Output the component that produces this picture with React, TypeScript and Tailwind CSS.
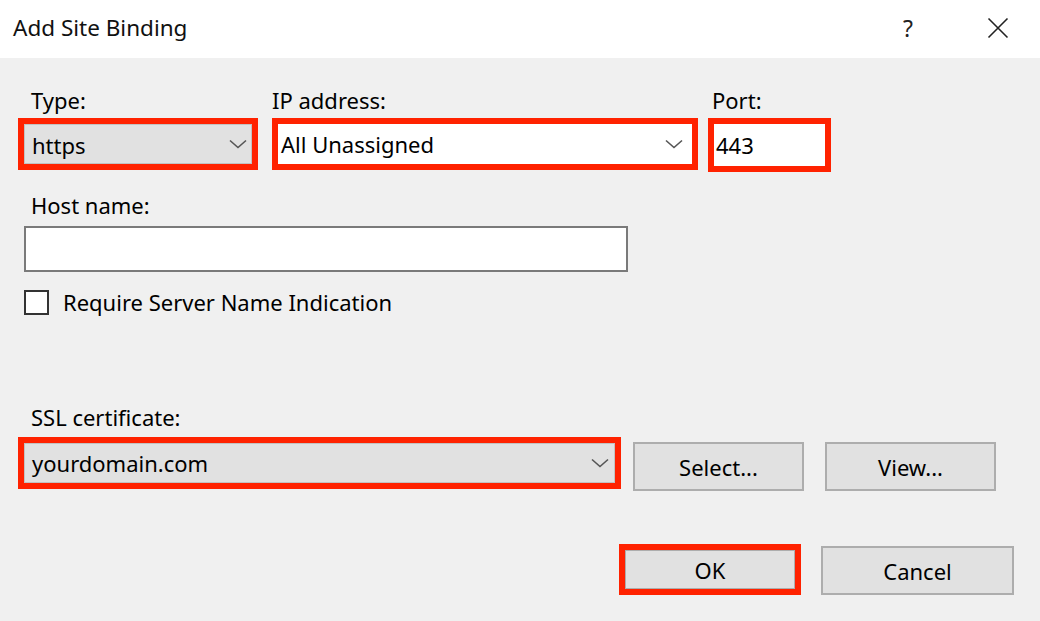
import React from "react";

function Chevron() {
  return (
    <svg width="18" height="10" viewBox="0 0 18 10" className="shrink-0">
      <path d="M1 1.5 L9 8.5 L17 1.5" fill="none" stroke="#555" strokeWidth="1.6" />
    </svg>
  );
}

export default function App() {
  return (
    <div className="w-[1040px] h-[621px] bg-[#f0f0f0] flex flex-col overflow-hidden text-black font-['Noto_Sans',sans-serif] text-[22px]">
      {/* Title bar */}
      <div className="h-[58px] bg-white flex items-center pl-[13px] pr-[31px] pb-[2px] shrink-0">
        <span className="text-[22.5px] leading-[30px] text-[#111]">Add Site Binding</span>
        <span className="ml-auto text-[23px] leading-[30px] text-[#222]">?</span>
        <svg width="22" height="22" viewBox="0 0 22 22" className="ml-[74px]">
          <path d="M1.5 1.5 L20.5 20.5 M20.5 1.5 L1.5 20.5" stroke="#222" strokeWidth="1.6" />
        </svg>
      </div>

      {/* Body */}
      <div className="flex flex-col pl-[18px] pt-[29px]">
        {/* Row 1 */}
        <div className="flex items-start">
          <div className="w-[240px] flex flex-col">
            <div className="h-[26px] leading-[26px] pl-[13px]">Type:</div>
            <div className="mt-[5px] h-[52px] border-[6px] border-[#ff2200]">
              <div className="h-full border border-[#c2c2c2] bg-[#e1e1e1] flex items-center pl-[7px] pr-[4px]">
                <span className="leading-[26px] pt-[2px]">https</span>
                <span className="ml-auto"><Chevron /></span>
              </div>
            </div>
          </div>
          <div className="w-[426px] ml-[14px] flex flex-col">
            <div className="h-[26px] leading-[26px]">IP address:</div>
            <div className="mt-[5px] h-[52px] border-[6px] border-[#ff2200] bg-white flex items-center pl-[3px] pr-[9px]">
              <span className="leading-[26px]">All Unassigned</span>
              <span className="ml-auto"><Chevron /></span>
            </div>
          </div>
          <div className="w-[123px] ml-[10px] flex flex-col">
            <div className="h-[26px] leading-[26px] pl-[4px]">Port:</div>
            <div className="mt-[5px] h-[54px] border-[6px] border-[#ff2200] bg-white flex items-center pl-[2px]">
              <span className="leading-[26px]">443</span>
            </div>
          </div>
        </div>

        {/* Host name */}
        <div className="mt-[20px] h-[26px] leading-[26px] pl-[13px]">Host name:</div>
        <div className="mt-[8px] ml-[6px] w-[604px] h-[46px] bg-white border-2 border-[#7a7a7a]"></div>

        {/* Checkbox */}
        <div className="mt-[18px] ml-[6px] flex items-center h-[25px]">
          <div className="w-[25px] h-[25px] border-2 border-[#333] bg-white shrink-0"></div>
          <span className="ml-[14px] leading-[25px]">Require Server Name Indication</span>
        </div>

        {/* SSL */}
        <div className="mt-[89px] h-[26px] leading-[26px] pl-[13px]">SSL certificate:</div>
        <div className="mt-[7px] flex items-start">
          <div className="w-[603px] h-[52px] border-[6px] border-[#ff2200]">
            <div className="h-full border border-[#c2c2c2] bg-[#e1e1e1] flex items-center pl-[7px] pr-[5px]">
              <span className="leading-[26px]">yourdomain.com</span>
              <span className="ml-auto"><Chevron /></span>
            </div>
          </div>
          <div className="ml-[12px] mt-[5px] w-[171px] h-[49px] border-2 border-[#adadad] bg-[#e1e1e1] flex items-center justify-center leading-[26px]">
            Select...
          </div>
          <div className="ml-[21px] mt-[5px] w-[171px] h-[49px] border-2 border-[#adadad] bg-[#e1e1e1] flex items-center justify-center leading-[26px]">
            View...
          </div>
        </div>

        {/* Buttons */}
        <div className="mt-[53px] flex items-start justify-end pr-[26px]">
          <div className="w-[182px] h-[51px] border-[6px] border-[#ff2200]">
            <div className="h-full border border-[#adadad] bg-[#e1e1e1] flex items-center justify-center leading-[26px]">OK</div>
          </div>
          <div className="ml-[20px] mt-[2px] w-[193px] h-[49px] border-2 border-[#adadad] bg-[#e1e1e1] flex items-center justify-center leading-[26px]">
            Cancel
          </div>
        </div>
      </div>
    </div>
  );
}
